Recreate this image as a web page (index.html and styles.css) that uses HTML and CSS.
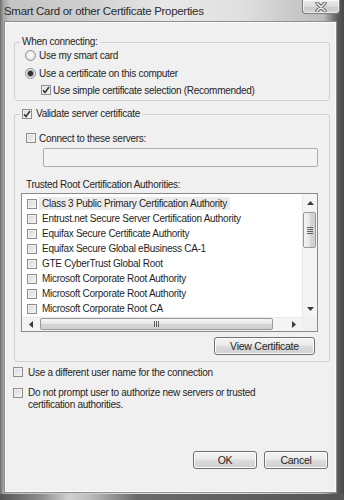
FILE: index.html
```html
<!DOCTYPE html>
<html lang="en">
<head>
    <meta charset="UTF-8">
    <title>Smart Card or other Certificate Properties</title>
    <link rel="stylesheet" href="styles.css">
</head>
<body>
    <div class="window">
        <div class="titlebar">
            <span class="title">Smart Card or other Certificate Properties</span>
            <span class="close">
                <svg width="12" height="10" viewBox="0 0 12 10">
                    <path d="M2 1 L10 9 M10 1 L2 9" stroke="#5a5a5a" stroke-width="3.4" stroke-linecap="round"/>
                    <path d="M2 1 L10 9 M10 1 L2 9" stroke="#f4f4f4" stroke-width="1.6" stroke-linecap="round"/>
                </svg>
            </span>
        </div>

        <div class="panel">
            <fieldset class="group connect-group">
                <legend>When connecting:</legend>
                <div class="option first"><span class="radio"></span>Use my smart card</div>
                <div class="option"><span class="radio on"></span>Use a certificate on this computer</div>
                <div class="option sub">
                    <span class="check"><svg width="8" height="8" viewBox="0 0 8 8"><path d="M1 4.2 L3 6.6 L7 1" stroke="#2e2e2e" stroke-width="1.5" fill="none"/></svg></span>
                    Use simple certificate selection (Recommended)
                </div>
            </fieldset>

            <fieldset class="group validate-group">
                <legend>
                    <span class="check"><svg width="8" height="8" viewBox="0 0 8 8"><path d="M1 4.2 L3 6.6 L7 1" stroke="#2e2e2e" stroke-width="1.5" fill="none"/></svg></span>
                    Validate server certificate
                </legend>
                <div class="option servers"><span class="check"></span>Connect to these servers:</div>
                <div class="textbox"></div>
                <div class="list-label">Trusted Root Certification Authorities:</div>

                <div class="listbox">
                    <ul class="items">
                        <li><span class="check"></span><span class="focused">Class 3 Public Primary Certification Authority</span></li>
                        <li><span class="check"></span><span>Entrust.net Secure Server Certification Authority</span></li>
                        <li><span class="check"></span><span>Equifax Secure Certificate Authority</span></li>
                        <li><span class="check"></span><span>Equifax Secure Global eBusiness CA-1</span></li>
                        <li><span class="check"></span><span>GTE CyberTrust Global Root</span></li>
                        <li><span class="check"></span><span>Microsoft Corporate Root Authority</span></li>
                        <li><span class="check"></span><span>Microsoft Corporate Root Authority</span></li>
                        <li><span class="check"></span><span>Microsoft Corporate Root CA</span></li>
                    </ul>
                    <div class="vscroll">
                        <span class="arrow-btn"><svg width="7" height="4" viewBox="0 0 7 4"><polygon points="0,4 3.5,0 7,4" fill="#3a3a3a"/></svg></span>
                        <span class="thumb vthumb"><i></i><i></i><i></i><i></i></span>
                        <span class="track"></span>
                        <span class="arrow-btn"><svg width="7" height="4" viewBox="0 0 7 4"><polygon points="0,0 3.5,4 7,0" fill="#3a3a3a"/></svg></span>
                    </div>
                    <div class="hscroll">
                        <span class="arrow-btn"><svg width="4" height="7" viewBox="0 0 4 7"><polygon points="4,0 0,3.5 4,7" fill="#3a3a3a"/></svg></span>
                        <span class="thumb hthumb"><i></i><i></i><i></i></span>
                        <span class="track"></span>
                        <span class="arrow-btn"><svg width="4" height="7" viewBox="0 0 4 7"><polygon points="0,0 4,3.5 0,7" fill="#3a3a3a"/></svg></span>
                    </div>
                    <div class="corner"></div>
                </div>

                <div class="view-row"><button class="btn view-btn">View Certificate</button></div>
            </fieldset>

            <div class="option outer"><span class="check"></span>Use a different user name for the connection</div>
            <div class="option outer prompt">
                <span class="check"></span>
                <span>Do not prompt user to authorize new servers or trusted<br>certification authorities.</span>
            </div>

            <div class="footer">
                <button class="btn">OK</button>
                <button class="btn">Cancel</button>
            </div>
        </div>
    </div>
</body>
</html>
```

FILE: styles.css
```css
/* General Styles */
* {
    box-sizing: border-box;
}

body {
    margin: 0;
    font-family: "Liberation Sans", Arial, sans-serif;
    font-size: 10px;
    letter-spacing: -0.28px;
    color: #1f1f1f;
}

/* Window frame */
.window {
    width: 344px;
    height: 500px;
    display: flex;
    flex-direction: column;
    padding: 0 7px 7px 4px;
    background:
        linear-gradient(to right, #555555 0, #8e8e8e 12%, #d0d0d0 20%, #bdbdbd 26%, #6a6a6a 40%, #565656 100%) left bottom / 100% 6px no-repeat,
        linear-gradient(to right, #6c6c6c 0, #a4a4a4 1%, #c4c4c4 3%, #cfcfcf 25%, #e8e8e8 48%, #e0e0e0 70%, #bcbcbc 94%, #5e5e5e 98%, #484848 100%);
}

.titlebar {
    height: 21px;
    display: flex;
    align-items: flex-start;
}

.title {
    margin: 5px 0 0 0;
    font-size: 11.5px;
    letter-spacing: -0.3px;
    color: #2c2c2c;
}

.close {
    margin-left: auto;
    margin-right: -3px;
    width: 38px;
    height: 14px;
    border: 1px solid #7c7c7c;
    border-top: none;
    border-radius: 0 0 4px 4px;
    background: linear-gradient(#ebebeb, #dadada 50%, #cacaca 51%, #d4d4d4);
    box-shadow: inset 0 0 0 1px rgba(255, 255, 255, 0.6);
    display: flex;
    align-items: center;
    justify-content: center;
}

.panel {
    flex: 1;
    display: flex;
    flex-direction: column;
    border: 1px solid #8e8e8e;
    background: #f0f0f0;
    box-shadow: inset 0 0 0 1px #fbfbfb;
}

/* Group boxes */
.group {
    margin: 13px 6px 0 9px;
    padding: 0 0 2px;
    border: 1px solid #d0d0d0;
    border-radius: 3px;
    min-width: 0;
}

.group legend {
    margin-left: 5px;
    padding: 0 2px;
    height: 14px;
    line-height: 14px;
    display: flex;
    align-items: center;
}

.validate-group {
    margin-top: 6px;
    padding-bottom: 6px;
}

.validate-group legend .check {
    margin-right: 4px;
}

.option {
    display: flex;
    align-items: center;
    height: 18px;
    padding-left: 10px;
}

.option.first {
    margin-top: -3px;
}

.option.sub {
    height: 16px;
    padding-left: 26px;
}

.option.sub .check {
    margin-right: 2px;
}

.option.servers {
    height: 16px;
    margin-top: 9px;
    padding-left: 11px;
}

.option.servers .check {
    margin-right: 3px;
}

.option.outer {
    height: 16px;
    margin: 2px 0 0 8px;
    padding-left: 0;
}

.option.outer .check {
    margin-right: 5px;
}

.option.prompt {
    height: auto;
    margin-top: 7px;
    align-items: flex-start;
    line-height: 12px;
}

.option.prompt .check {
    margin-top: 1px;
}

/* Controls */
.radio {
    flex: none;
    width: 11px;
    height: 11px;
    margin-right: 3px;
    border: 1px solid #8c8c8c;
    border-radius: 50%;
    background: radial-gradient(circle at 50% 45%, #fdfdfd 0, #e4e4e4 70%, #d6d6d6 100%);
}

.radio.on {
    background: radial-gradient(circle at 50% 50%, #3a3a3a 0, #2a2a2a 2px, #9a9a9a 3px, #f2f2f2 4px, #dcdcdc 100%);
}

.check {
    flex: none;
    width: 10px;
    height: 10px;
    border: 1px solid #8e8e8e;
    background: linear-gradient(135deg, #d6d6d6, #f7f7f7);
    box-shadow: inset 0 0 0 1px #f1f1f1;
    display: inline-flex;
    align-items: center;
    justify-content: center;
}

.textbox {
    margin: 2px 0 0 28px;
    width: 275px;
    height: 19px;
    border: 1px solid #adadad;
    border-radius: 2px;
    background: #f3f3f3;
}

.list-label {
    margin-top: 11px;
    padding-left: 11px;
    line-height: 14px;
}

/* List box */
.listbox {
    margin: 1px 0 0 6px;
    width: 297px;
    height: 139px;
    border: 1px solid #8a8a8a;
    background: #fff;
    display: grid;
    grid-template-columns: 280px 15px;
    grid-template-rows: 123px 14px;
}

.items {
    list-style: none;
    margin: 0;
    padding: 2px 0 0;
    overflow: hidden;
}

.items li {
    height: 15px;
    display: flex;
    align-items: center;
    padding-left: 5px;
    white-space: nowrap;
}

.items li .check {
    margin-right: 2px;
}

.items li span + span {
    padding: 0 3px;
    line-height: 13px;
}

.items .focused {
    background: #ececec;
}

.vscroll {
    display: flex;
    flex-direction: column;
    background: #f4f4f4;
    border-left: 1px solid #e8e8e8;
}

.hscroll {
    display: flex;
    background: #f4f4f4;
    border-top: 1px solid #e8e8e8;
}

.arrow-btn {
    flex: none;
    width: 17px;
    height: 17px;
    display: flex;
    align-items: center;
    justify-content: center;
}

.vscroll .arrow-btn {
    width: auto;
}

.hscroll .arrow-btn {
    height: auto;
}

.track {
    flex: 1;
}

.thumb {
    flex: none;
    border: 1px solid #9a9a9a;
    border-radius: 2px;
    display: flex;
    align-items: center;
    justify-content: center;
}

.vthumb {
    margin: 1px 1px 0 0;
    height: 36px;
    flex-direction: column;
    gap: 1px;
    background: linear-gradient(to right, #f4f4f4, #e6e6e6 50%, #d6d6d6 51%, #d0d0d0);
}

.vthumb i {
    width: 6px;
    height: 1px;
    background: #606060;
}

.hthumb {
    margin: 0 0 1px 1px;
    width: 233px;
    gap: 1px;
    background: linear-gradient(#f4f4f4, #e6e6e6 50%, #d6d6d6 51%, #d0d0d0);
}

.hthumb i {
    width: 1px;
    height: 6px;
    background: #606060;
}

.corner {
    background: #f0f0f0;
}

/* Buttons */
.btn {
    height: 18px;
    padding: 0;
    border: 1px solid #707070;
    border-radius: 3px;
    background: linear-gradient(#f4f4f4, #ebebeb 45%, #dddddd 50%, #cfcfcf);
    box-shadow: inset 0 0 0 1px #fcfcfc;
    font-family: inherit;
    font-size: 10.5px;
    letter-spacing: -0.25px;
    color: #1f1f1f;
}

.view-row {
    margin: 5px 0 0 199px;
}

.view-btn {
    width: 101px;
}

.footer {
    margin: auto 8px 23px 0;
    display: flex;
    justify-content: flex-end;
    gap: 7px;
}

.footer .btn {
    width: 64px;
}
```
